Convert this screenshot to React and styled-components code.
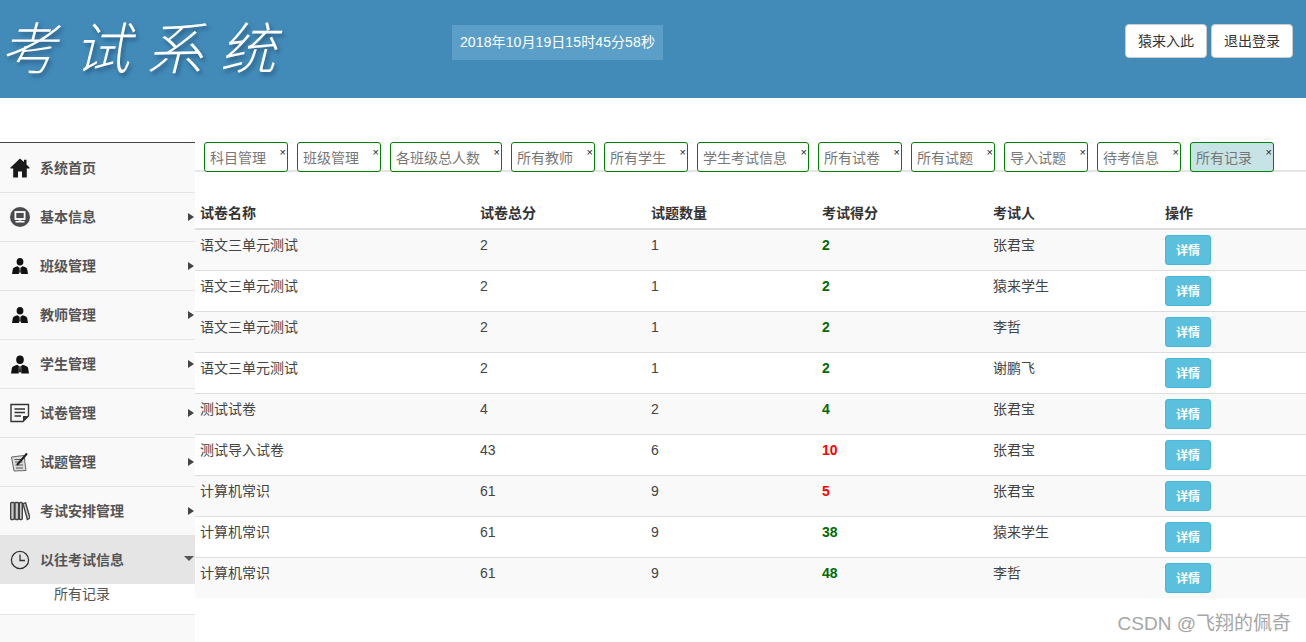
import React from 'react';
import styled, { createGlobalStyle } from 'styled-components';

const GlobalStyle = createGlobalStyle`
    html, body {
        margin: 0;
        padding: 0;
        height: 100%;
        overflow: hidden;
        background: #fff;
    }
    body {
        font-family: "Liberation Sans", "Noto Sans CJK SC", sans-serif;
        font-size: 14px;
        line-height: 20px;
        color: #333;
    }
`;

const Page = styled.div`
    position: relative;
    width: 1306px;
    height: 642px;
    overflow: hidden;
`;

const Header = styled.header`
    display: flex;
    align-items: flex-start;
    height: 98px;
    background: #428bb9;
`;

const Logo = styled.div`
    width: 452px;
    padding: 10px 0 0 1px;
    box-sizing: border-box;
    font-family: "Noto Sans CJK JP", "Noto Sans CJK SC", sans-serif;
    font-size: 56px;
    font-weight: 200;
    line-height: 70px;
    letter-spacing: 17px;
    color: #fff;
    white-space: nowrap;
    text-shadow: 2px 3px 4px rgba(20, 50, 80, 0.55);
    font-style: italic;
`;

const Clock = styled.div`
    margin-top: 25px;
    width: 211px;
    height: 35px;
    line-height: 35px;
    letter-spacing: 0.1px;
    text-align: center;
    color: #fff;
    background: #5b9fc9;
`;

const HeaderActions = styled.div`
    display: flex;
    gap: 4px;
    margin: 24px 13px 0 auto;
`;

const HeaderButton = styled.button`
    width: 82px;
    height: 34px;
    padding: 0;
    font: inherit;
    color: #333;
    background: #fff;
    border: 1px solid #ccc;
    border-radius: 4px;
`;

const Body = styled.div`
    display: flex;
    margin-top: 44px;
    height: 500px;
`;

const Sidebar = styled.nav`
    flex: none;
    width: 195px;
    padding-top: 1px;
    background: #f9f9f9;
    border-top: 1px solid #444;
`;

const MenuItem = styled.div`
    display: flex;
    align-items: center;
    box-sizing: border-box;
    height: ${p => (p.$open ? '48px' : '49px')};
    padding-left: 10px;
    font-weight: ${p => (p.$open ? 700 : 600)};
    color: #555;
    background: ${p => (p.$open ? '#e5e5e5' : 'transparent')};
    border-bottom: ${p => (p.$open ? '0' : '1px solid #e5e5e5')};
`;

const MenuIcon = styled.span`
    display: flex;
    align-items: center;
    justify-content: center;
    flex: none;
    width: 20px;
    height: 20px;
    margin-right: 10px;
`;

const ArrowRight = styled.i`
    margin-left: auto;
    width: 0;
    height: 0;
    border-style: solid;
    border-width: 4px 0 4px 6px;
    border-color: transparent transparent transparent #444;
    margin-right: 1px;
`;

const ArrowDown = styled.i`
    margin-left: auto;
    margin-right: 1px;
    width: 0;
    height: 0;
    margin-top: -4px;
    border-style: solid;
    border-width: 5px 5px 0;
    border-color: #555 transparent transparent;
`;

const SubItem = styled.div`
    box-sizing: border-box;
    height: 31px;
    padding: 0 0 0 54px;
    line-height: 20px;
    color: #555;
    background: #fff;
    border-bottom: 1px solid #e5e5e5;
`;

const Main = styled.main`
    flex: 1;
    min-width: 0;
`;

const TabBar = styled.div`
    display: flex;
    align-items: flex-start;
    gap: 9px;
    box-sizing: border-box;
    height: 30px;
    padding-left: 9px;
    border-bottom: 2px solid #e5e5e5;
`;

const Tab = styled.div`
    position: relative;
    flex: none;
    box-sizing: border-box;
    height: 30px;
    padding: 5px 21px 0 5px;
    color: #777;
    background: ${p => (p.$active ? '#c6e3e6' : '#fff')};
    border: 1px solid green;
    border-radius: 3px;
`;

const TabClose = styled.span`
    position: absolute;
    top: 1px;
    right: 1px;
    font-size: 11px;
    line-height: 16px;
    color: #222;
`;

const RecordTable = styled.table`
    width: 100%;
    margin-top: 26px;
    border-collapse: collapse;
    table-layout: fixed;
    th, td {
        padding: 5px;
        text-align: left;
        vertical-align: top;
        line-height: 20px;
    }
    th {
        font-weight: 700;
        border-bottom: 2px solid #ddd;
    }
    td {
        color: #444;
        border-top: 1px solid #ddd;
    }
    tbody tr:first-child td {
        border-top: 0;
    }
    tbody tr:nth-child(odd) {
        background: #f9f9f9;
    }
`;

const Score = styled.b`
    color: ${p => (p.$fail ? 'red' : '#006b00')};
`;

const InfoButton = styled.button`
    display: block;
    width: 46px;
    height: 30px;
    padding: 1px 0 0;
    font: inherit;
    font-size: 12px;
    font-weight: 600;
    color: #fff;
    background: #5bc0de;
    border: 1px solid #46b8da;
    border-radius: 3px;
`;

const Watermark = styled.div`
    position: absolute;
    right: 15px;
    bottom: 6px;
    font-size: 19px;
    line-height: 24px;
    color: #a6a6a6;
`;

const HomeIcon = () => (
    <svg width="20" height="20" viewBox="0 0 20 20">
        <path fill="#1a1a1a" d="M10 0.5 L14 4 V1.8 H16.5 V6.4 L19.5 9.4 V10.6 H16.8 V19.5 H12 V13.5 H8 V19.5 H3.2 V10.6 H0.5 V9.4 Z" />
    </svg>
);

const MonitorIcon = () => (
    <svg width="20" height="20" viewBox="0 0 20 20">
        <circle cx="10" cy="10" r="10" fill="#4a4a4f" />
        <rect x="5.4" y="5" width="9.2" height="7" fill="none" stroke="#fff" strokeWidth="1.8" />
        <rect x="8.6" y="12" width="2.8" height="1.6" fill="#fff" />
        <rect x="5.5" y="14" width="9" height="1.5" fill="#fff" />
    </svg>
);

const ManIcon = ({ large }) => (
    <svg width={large ? 18 : 16} height={large ? 19 : 16} viewBox="0 0 16 16">
        <ellipse cx="8" cy="3.8" rx="3.4" ry="3.8" fill="#111" />
        <path fill="#111" d="M0 16 L0.8 11.2 Q1.2 9.2 5.6 8.2 L7 9.4 L6.9 16 Z M16 16 L15.2 11.2 Q14.8 9.2 10.4 8.2 L9 9.4 L9.1 16 Z" />
        <path fill="#111" d="M7.5 9.4 H8.5 L8.8 14 L8 15.5 L7.2 14 Z" />
    </svg>
);

const PaperIcon = () => (
    <svg width="20" height="20" viewBox="0 0 20 20">
        <path fill="none" stroke="#333" strokeWidth="1.4" d="M1 1.5 H18.5 V13 L13 18.5 H1 Z" />
        <path fill="#333" d="M18.5 13 L13 18.5 V13 Z" />
        <path stroke="#333" strokeWidth="1.4" d="M4.5 6 H15 M4.5 9.5 H15 M4.5 13 H11" />
    </svg>
);

const PencilPaperIcon = () => (
    <svg width="20" height="20" viewBox="0 0 20 20">
        <path fill="#ddd" stroke="#666" d="M1.5 5 L14 3.5 L16 18.5 L4 19 Z" />
        <path stroke="#555" d="M4.5 7.5 H12 M5 10 H12.5 M5.5 13 H13 M6 16 H13" />
        <path stroke="#222" strokeWidth="2" d="M7 13 L17 1.5" />
    </svg>
);

const BooksIcon = () => (
    <svg width="20" height="20" viewBox="0 0 20 20">
        <g fill="#ccc" stroke="#444" strokeWidth="1.4">
            <rect x="0.7" y="1.5" width="3.6" height="17" rx="1" />
            <rect x="5" y="1.5" width="3.6" height="17" rx="1" />
            <rect x="9.3" y="1.5" width="3" height="17" rx="1" />
            <path d="M13 2.6 L15.6 1.8 L20 17 L17.4 18.4 Z" />
        </g>
    </svg>
);

const ClockIcon = () => (
    <svg width="20" height="20" viewBox="0 0 20 20">
        <circle cx="10" cy="10" r="8.6" fill="none" stroke="#333" strokeWidth="1.3" />
        <path fill="none" stroke="#333" strokeWidth="1.3" d="M10 4.5 V10.5 H15" />
    </svg>
);

const menu = [
    { name: '系统首页', icon: <HomeIcon />, leaf: true },
    { name: '基本信息', icon: <MonitorIcon /> },
    { name: '班级管理', icon: <ManIcon /> },
    { name: '教师管理', icon: <ManIcon /> },
    { name: '学生管理', icon: <ManIcon large /> },
    { name: '试卷管理', icon: <PaperIcon /> },
    { name: '试题管理', icon: <PencilPaperIcon /> },
    { name: '考试安排管理', icon: <BooksIcon /> },
];

const tabs = ['科目管理', '班级管理', '各班级总人数', '所有教师', '所有学生', '学生考试信息', '所有试卷', '所有试题', '导入试题', '待考信息', '所有记录'];

const records = [
    ['语文三单元测试', 2, 1, 2, '张君宝'],
    ['语文三单元测试', 2, 1, 2, '猿来学生'],
    ['语文三单元测试', 2, 1, 2, '李哲'],
    ['语文三单元测试', 2, 1, 2, '谢鹏飞'],
    ['测试试卷', 4, 2, 4, '张君宝'],
    ['测试导入试卷', 43, 6, 10, '张君宝', true],
    ['计算机常识', 61, 9, 5, '张君宝', true],
    ['计算机常识', 61, 9, 38, '猿来学生'],
    ['计算机常识', 61, 9, 48, '李哲'],
];

export default function App() {
    return (
        <Page>
            <GlobalStyle />
            <Header>
                <Logo>考试系统</Logo>
                <Clock>2018年10月19日15时45分58秒</Clock>
                <HeaderActions>
                    <HeaderButton>猿来入此</HeaderButton>
                    <HeaderButton>退出登录</HeaderButton>
                </HeaderActions>
            </Header>
            <Body>
                <Sidebar>
                    {menu.map(({ name, icon, leaf }) => (
                        <MenuItem key={name}>
                            <MenuIcon>{icon}</MenuIcon>
                            {name}
                            {!leaf && <ArrowRight />}
                        </MenuItem>
                    ))}
                    <MenuItem $open>
                        <MenuIcon><ClockIcon /></MenuIcon>
                        以往考试信息
                        <ArrowDown />
                    </MenuItem>
                    <SubItem>所有记录</SubItem>
                </Sidebar>
                <Main>
                    <TabBar>
                        {tabs.map((tab, i) => (
                            <Tab key={tab} $active={i === tabs.length - 1}>
                                {tab}
                                <TabClose>×</TabClose>
                            </Tab>
                        ))}
                    </TabBar>
                    <RecordTable>
                        <colgroup>
                            <col style={{ width: 280 }} />
                            <col style={{ width: 171 }} />
                            <col style={{ width: 171 }} />
                            <col style={{ width: 171 }} />
                            <col style={{ width: 172 }} />
                            <col />
                        </colgroup>
                        <thead>
                            <tr>
                                <th>试卷名称</th>
                                <th>试卷总分</th>
                                <th>试题数量</th>
                                <th>考试得分</th>
                                <th>考试人</th>
                                <th>操作</th>
                            </tr>
                        </thead>
                        <tbody>
                            {records.map(([title, total, count, score, person, fail], i) => (
                                <tr key={i}>
                                    <td>{title}</td>
                                    <td>{total}</td>
                                    <td>{count}</td>
                                    <td><Score $fail={fail}>{score}</Score></td>
                                    <td>{person}</td>
                                    <td><InfoButton>详情</InfoButton></td>
                                </tr>
                            ))}
                        </tbody>
                    </RecordTable>
                </Main>
            </Body>
            <Watermark>CSDN @飞翔的佩奇</Watermark>
        </Page>
    );
}
